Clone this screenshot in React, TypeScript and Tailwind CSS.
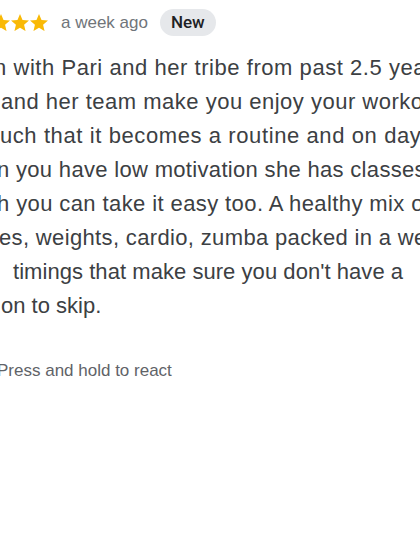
import React from 'react'

// review card, cropped on both sides like the original capture
const lines: { text: string; cls: string }[] = [
  { text: 'n with Pari and her tribe from past 2.5 years.', cls: '-ml-[6px] tracking-[0.55px]' },
  { text: 'and her team make you enjoy your workouts so', cls: 'ml-[1px] tracking-[0.5px]' },
  { text: 'much that it becomes a routine and on days', cls: '-ml-[19px] tracking-[0.6px]' },
  { text: 'n you have low motivation she has classes', cls: '-ml-[3px] tracking-[0.32px]' },
  { text: 'h you can take it easy too. A healthy mix of', cls: '-ml-[3px] tracking-[0.4px]' },
  { text: 'es, weights, cardio, zumba packed in a week', cls: '-ml-[1px] tracking-[0.35px]' },
  { text: "timings that make sure you don't have a", cls: 'ml-[13px] tracking-[0.05px]' },
  { text: 'on to skip.', cls: 'ml-[1px]' },
]

function Star() {
  return (
    <svg viewBox="2 2 20 19.27" className="w-[18px] h-[17.3px] shrink-0" fill="#f9b906">
      <path d="M12 17.27L18.18 21l-1.64-7.03L22 9.24l-7.19-.61L12 2 9.19 8.63 2 9.24l5.46 4.73L5.82 21z" />
    </svg>
  )
}

export default function App() {
  return (
    <div className="w-[420px] h-[560px] overflow-hidden bg-white font-['Liberation_Sans',Arial,sans-serif]">
      <div className="flex items-center pt-[9px] h-[27px] box-content">
        <div className="flex items-center gap-[1px] -ml-[8px]">
          <Star />
          <Star />
          <Star />
        </div>
        <span className="ml-[13px] text-[17px] text-[#70757a] whitespace-nowrap">a week ago</span>
        <span className="ml-[12px] h-[27px] px-[11px] flex items-center rounded-full bg-[#e6e8eb] font-['Roboto',sans-serif] font-medium text-[17px] text-[#202124] whitespace-nowrap">
          New
        </span>
      </div>

      <div className="mt-[15px] text-[22px] leading-[34px] text-[#3c4043]">
        {lines.map((line, i) => (
          <div key={i} className={`whitespace-nowrap ${line.cls}`}>
            {line.text}
          </div>
        ))}
      </div>

      <div className="mt-[36px] -ml-[3px] text-[17px] leading-[24px] text-[#5f6368] whitespace-nowrap">
        Press and hold to react
      </div>
    </div>
  )
}
